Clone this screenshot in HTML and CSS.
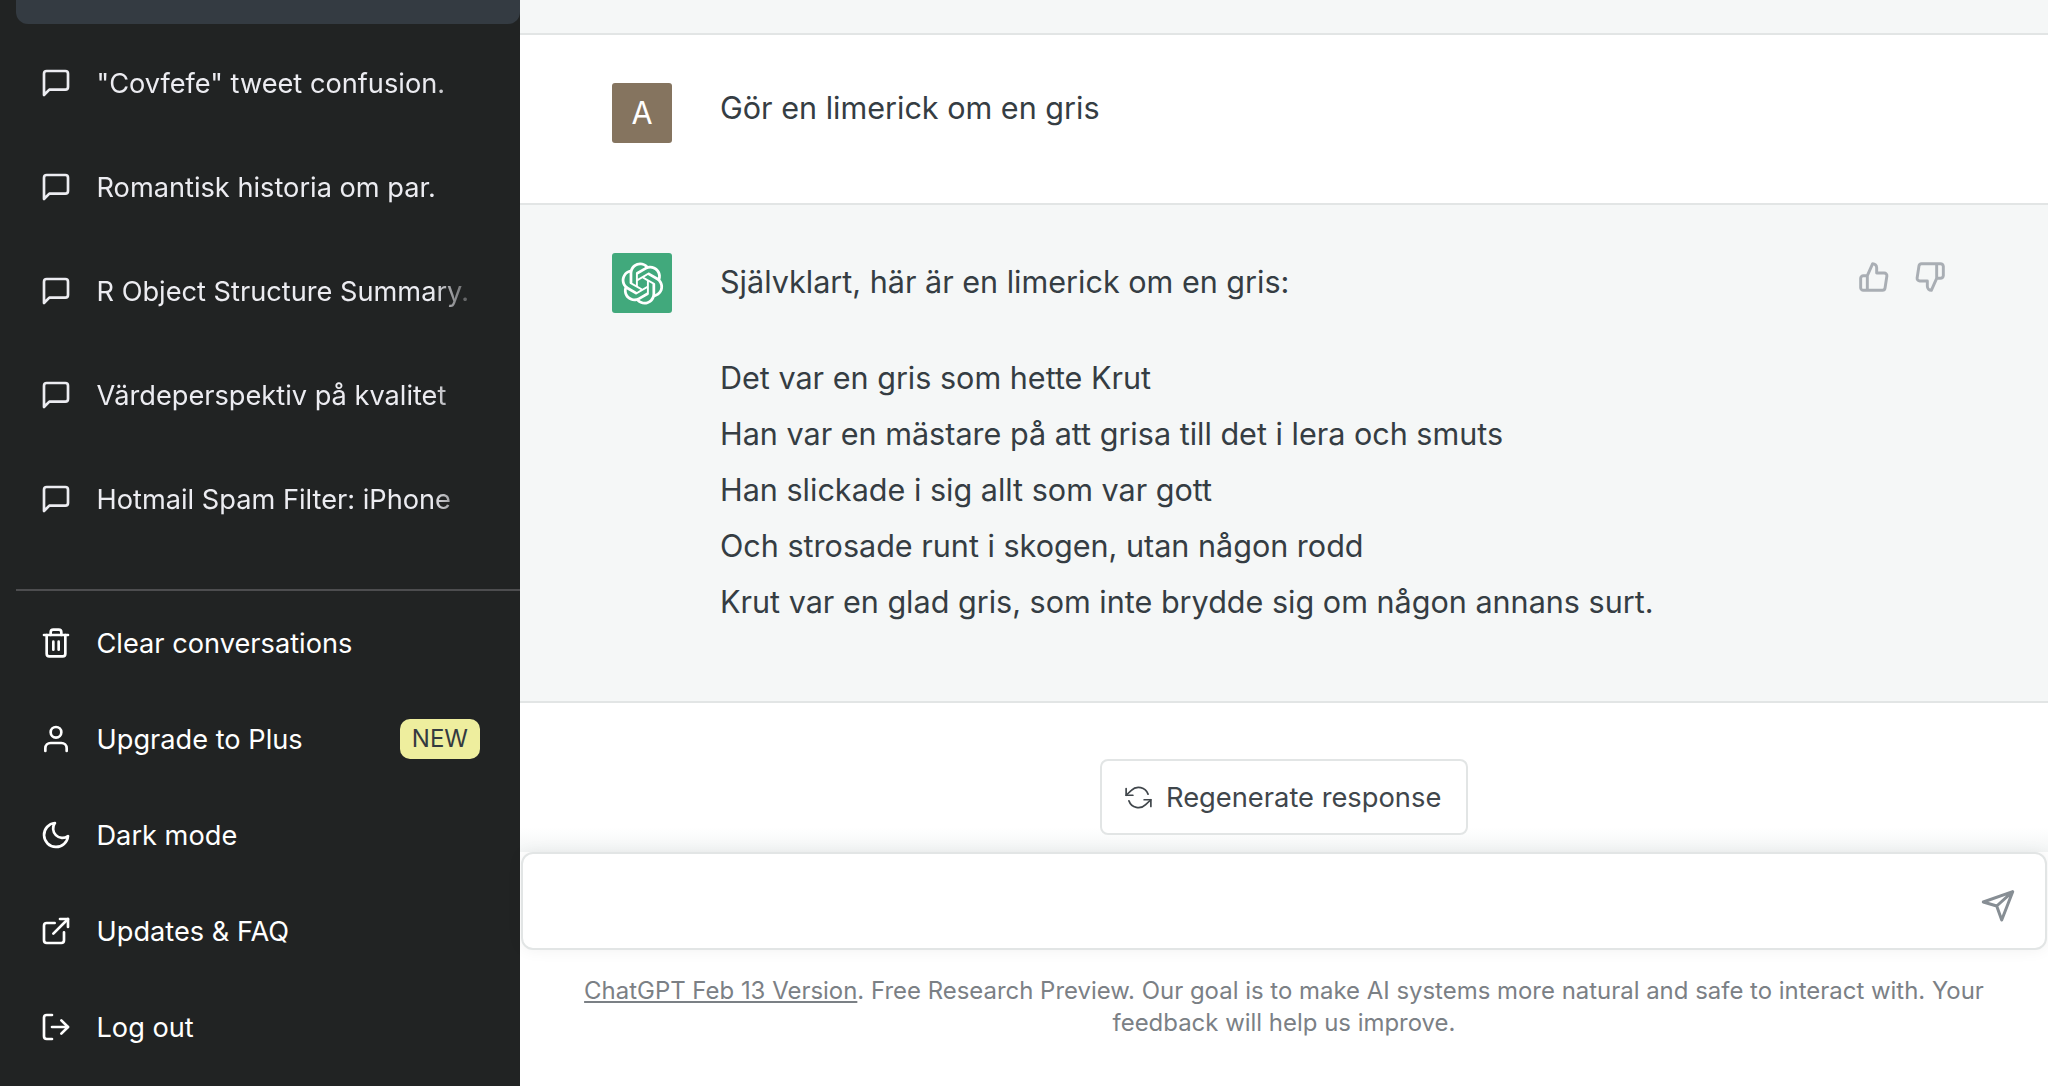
FILE: index.html
```html
<!DOCTYPE html>
<html>

<head>
	<meta charset="UTF-8">
	<link rel="stylesheet" href="styles.css">
</head>

<body>
	<div class="app">
		<!-- sidebar -->
		<nav class="sidebar">
			<div class="active-chat"></div>
			<div class="chat-list">
				<div class="chat-item">
					<svg class="icon" viewBox="0 0 24 24"><path d="M21 15a2 2 0 0 1-2 2H7l-4 4V5a2 2 0 0 1 2-2h14a2 2 0 0 1 2 2z"></path></svg>
					<span class="chat-title">"Covfefe" tweet confusion.</span>
				</div>
				<div class="chat-item">
					<svg class="icon" viewBox="0 0 24 24"><path d="M21 15a2 2 0 0 1-2 2H7l-4 4V5a2 2 0 0 1 2-2h14a2 2 0 0 1 2 2z"></path></svg>
					<span class="chat-title">Romantisk historia om par.</span>
				</div>
				<div class="chat-item">
					<svg class="icon" viewBox="0 0 24 24"><path d="M21 15a2 2 0 0 1-2 2H7l-4 4V5a2 2 0 0 1 2-2h14a2 2 0 0 1 2 2z"></path></svg>
					<span class="chat-title">R Object Structure Summary.</span>
				</div>
				<div class="chat-item">
					<svg class="icon" viewBox="0 0 24 24"><path d="M21 15a2 2 0 0 1-2 2H7l-4 4V5a2 2 0 0 1 2-2h14a2 2 0 0 1 2 2z"></path></svg>
					<span class="chat-title">Värdeperspektiv på kvalitet</span>
				</div>
				<div class="chat-item">
					<svg class="icon" viewBox="0 0 24 24"><path d="M21 15a2 2 0 0 1-2 2H7l-4 4V5a2 2 0 0 1 2-2h14a2 2 0 0 1 2 2z"></path></svg>
					<span class="chat-title">Hotmail Spam Filter: iPhone</span>
				</div>
			</div>
			<div class="menu">
				<div class="menu-item">
					<svg class="icon" viewBox="0 0 24 24"><polyline points="3 6 5 6 21 6"></polyline><path d="M19 6v14a2 2 0 0 1-2 2H7a2 2 0 0 1-2-2V6m3 0V4a2 2 0 0 1 2-2h4a2 2 0 0 1 2 2v2"></path><line x1="10" y1="11" x2="10" y2="17"></line><line x1="14" y1="11" x2="14" y2="17"></line></svg>
					<span>Clear conversations</span>
				</div>
				<div class="menu-item">
					<svg class="icon" viewBox="0 0 24 24"><path d="M20 21v-2a4 4 0 0 0-4-4H8a4 4 0 0 0-4 4v2"></path><circle cx="12" cy="7" r="4"></circle></svg>
					<span>Upgrade to Plus</span>
					<span class="badge">NEW</span>
				</div>
				<div class="menu-item">
					<svg class="icon" viewBox="0 0 24 24"><path d="M21 12.79A9 9 0 1 1 11.21 3 7 7 0 0 0 21 12.79z"></path></svg>
					<span>Dark mode</span>
				</div>
				<div class="menu-item">
					<svg class="icon" viewBox="0 0 24 24"><path d="M18 13v6a2 2 0 0 1-2 2H5a2 2 0 0 1-2-2V8a2 2 0 0 1 2-2h6"></path><polyline points="15 3 21 3 21 9"></polyline><line x1="10" y1="14" x2="21" y2="3"></line></svg>
					<span>Updates &amp; FAQ</span>
				</div>
				<div class="menu-item">
					<svg class="icon" viewBox="0 0 24 24"><path d="M9 21H5a2 2 0 0 1-2-2V5a2 2 0 0 1 2-2h4"></path><polyline points="16 17 21 12 16 7"></polyline><line x1="21" y1="12" x2="9" y2="12"></line></svg>
					<span>Log out</span>
				</div>
			</div>
		</nav>

		<!-- conversation -->
		<main class="main">
			<div class="top-strip"></div>
			<section class="message message-user">
				<div class="avatar avatar-user">A</div>
				<div class="message-text">Gör en limerick om en gris</div>
			</section>
			<section class="message message-bot">
				<div class="avatar avatar-bot">
					<svg viewBox="0 0 41 41" class="bot-logo"><path d="M37.5324 16.8707C37.9808 15.5241 38.1363 14.0974 37.9886 12.6859C37.8409 11.2744 37.3934 9.91076 36.676 8.68622C35.6126 6.83404 33.9882 5.3676 32.0373 4.4985C30.0864 3.62941 27.9098 3.40259 25.8215 3.85078C24.8796 2.7893 23.7219 1.94125 22.4257 1.36341C21.1295 0.785575 19.7249 0.491269 18.3058 0.500197C16.1708 0.495044 14.0893 1.16803 12.3614 2.42214C10.6335 3.67624 9.34853 5.44666 8.6917 7.47815C7.30085 7.76286 5.98686 8.3414 4.8377 9.17505C3.68854 10.0087 2.73073 11.0782 2.02839 12.312C0.956464 14.1591 0.498905 16.2988 0.721698 18.4228C0.944492 20.5467 1.83612 22.5449 3.268 24.1293C2.81966 25.4759 2.66413 26.9026 2.81182 28.3141C2.95951 29.7256 3.40701 31.0892 4.12437 32.3138C5.18791 34.1659 6.8123 35.6322 8.76321 36.5013C10.7141 37.3704 12.8907 37.5973 14.9789 37.1492C15.9208 38.2107 17.0786 39.0587 18.3747 39.6366C19.6709 40.2144 21.0755 40.5087 22.4946 40.4998C24.6307 40.5054 26.7133 39.8321 28.4418 38.5772C30.1704 37.3223 31.4556 35.5506 32.1119 33.5179C33.5027 33.2332 34.8167 32.6547 35.9659 31.821C37.115 30.9874 38.0728 29.9178 38.7752 28.684C39.8458 26.8371 40.3023 24.6979 40.0789 22.5748C39.8556 20.4517 38.9639 18.4544 37.5324 16.8707ZM22.4978 37.8849C20.7443 37.8874 19.0459 37.2733 17.6994 36.1501C17.7601 36.117 17.8666 36.0586 17.936 36.0161L25.9004 31.4156C26.1003 31.3019 26.2663 31.137 26.3813 30.9378C26.4964 30.7386 26.5563 30.5124 26.5549 30.2825V19.0542L29.9213 20.998C29.9389 21.0068 29.9541 21.0198 29.9656 21.0359C29.977 21.052 29.9842 21.0707 29.9867 21.0902V30.3889C29.9842 32.375 29.1946 34.2791 27.7909 35.6841C26.3872 37.0892 24.4838 37.8806 22.4978 37.8849ZM6.39227 31.0064C5.51397 29.4888 5.19742 27.7107 5.49804 25.9832C5.55718 26.0187 5.66048 26.0818 5.73461 26.1244L13.699 30.7248C13.8975 30.8408 14.1233 30.902 14.3532 30.902C14.583 30.902 14.8088 30.8408 15.0073 30.7248L24.731 25.1103V28.9979C24.7321 29.0177 24.7283 29.0376 24.7199 29.0556C24.7115 29.0736 24.6988 29.0893 24.6829 29.1012L16.6317 33.7497C14.9096 34.7416 12.8643 35.0097 10.9447 34.4954C9.02506 33.9811 7.38785 32.7263 6.39227 31.0064ZM4.29707 13.6194C5.17156 12.0998 6.55279 10.9364 8.19885 10.3327C8.19885 10.4013 8.19491 10.5228 8.19491 10.6071V19.808C8.19351 20.0378 8.25334 20.2638 8.36823 20.4629C8.48312 20.6619 8.64893 20.8267 8.84863 20.9404L18.5723 26.5542L15.206 28.4979C15.1894 28.5089 15.1703 28.5155 15.1505 28.5173C15.1307 28.5191 15.1107 28.516 15.0924 28.5082L7.04046 23.8557C5.32135 22.8601 4.06716 21.2235 3.55289 19.3046C3.03862 17.3858 3.30624 15.3413 4.29707 13.6194ZM31.955 20.0556L22.2312 14.4411L25.5976 12.4981C25.6142 12.4872 25.6333 12.4805 25.6531 12.4787C25.6729 12.4769 25.6928 12.4801 25.7111 12.4879L33.7631 17.1364C34.9967 17.849 36.0017 18.8982 36.6606 20.1613C37.3194 21.4244 37.6047 22.849 37.4832 24.2684C37.3617 25.6878 36.8382 27.0432 35.9743 28.1759C35.1103 29.3086 33.9415 30.1717 32.6047 30.6641C32.6047 30.5947 32.6047 30.4733 32.6047 30.3889V21.188C32.6066 20.9586 32.5474 20.7328 32.4332 20.5338C32.319 20.3348 32.154 20.1698 31.955 20.0556ZM35.3055 15.0128C35.2464 14.9765 35.1431 14.9142 35.069 14.8717L27.1045 10.2712C26.906 10.1554 26.6803 10.0943 26.4504 10.0943C26.2206 10.0943 25.9948 10.1554 25.7963 10.2712L16.0726 15.8858V11.9982C16.0715 11.9783 16.0753 11.9585 16.0837 11.9405C16.0921 11.9225 16.1048 11.9068 16.1207 11.8949L24.1719 7.25025C25.4053 6.53903 26.8158 6.19376 28.2383 6.25482C29.6608 6.31589 31.0364 6.78077 32.2044 7.59508C33.3723 8.40939 34.2842 9.53945 34.8334 10.8531C35.3826 12.1667 35.5464 13.6095 35.3055 15.0128ZM14.2424 21.9419L10.8752 19.9981C10.8576 19.9893 10.8423 19.9763 10.8309 19.9602C10.8195 19.9441 10.8122 19.9254 10.8098 19.9058V10.6071C10.8107 9.18295 11.2173 7.78848 11.9819 6.58696C12.7466 5.38544 13.8377 4.42659 15.1275 3.82264C16.4173 3.21869 17.8524 2.99464 19.2649 3.1767C20.6775 3.35876 22.0089 3.93941 23.1034 4.85067C23.0427 4.88379 22.937 4.94215 22.8668 4.98473L14.9024 9.58517C14.7025 9.69878 14.5366 9.86356 14.4215 10.0626C14.3065 10.2616 14.2466 10.4877 14.2479 10.7175L14.2424 21.9419ZM16.071 17.9991L20.4018 15.4978L24.7325 17.9975V22.9985L20.4018 25.4983L16.071 22.9985V17.9991Z"></path></svg>
				</div>
				<div class="message-text">
					<p class="intro">Självklart, här är en limerick om en gris:</p>
					<p class="poem">Det var en gris som hette Krut<br>Han var en mästare på att grisa till det i lera och smuts<br>Han slickade i sig allt som var gott<br>Och strosade runt i skogen, utan någon rodd<br>Krut var en glad gris, som inte brydde sig om någon annans surt.</p>
				</div>
				<div class="feedback">
					<svg class="icon-small" viewBox="0 0 24 24"><path d="M14 9V5a3 3 0 0 0-3-3l-4 9v11h11.28a2 2 0 0 0 2-1.7l1.38-9a2 2 0 0 0-2-2.3zM7 22H4a2 2 0 0 1-2-2v-7a2 2 0 0 1 2-2h3"></path></svg>
					<svg class="icon-small" viewBox="0 0 24 24"><path d="M10 15v4a3 3 0 0 0 3 3l4-9V2H5.72a2 2 0 0 0-2 1.7l-1.38 9a2 2 0 0 0 2 2.3zm7-13h2.67A2.31 2.31 0 0 1 22 4v7a2.31 2.31 0 0 1-2.33 2H17"></path></svg>
				</div>
			</section>
			<div class="bottom">
				<div class="regen-row">
					<button class="regen">
						<svg class="icon-regen" viewBox="0 0 24 24"><polyline points="1 4 1 10 7 10"></polyline><polyline points="23 20 23 14 17 14"></polyline><path d="M20.49 9A9 9 0 0 0 5.64 5.64L1 10m22 4l-4.64 4.36A9 9 0 0 1 3.51 15"></path></svg>
						<span class="regen-label">Regenerate response</span>
					</button>
				</div>
				<div class="input-box">
					<svg class="icon-send" viewBox="0 0 36 36"><path d="M3.3 14 32.7 3.7 21.7 32 16.7 18ZM16.7 18 32.7 3.7"></path></svg>
				</div>
				<p class="footer-note"><u>ChatGPT Feb 13 Version</u>. Free Research Preview. Our goal is to make AI systems more natural and safe to interact with. Your feedback will help us improve.</p>
			</div>
		</main>
	</div>
</body>

</html>
```

FILE: styles.css
```css
html,
body {
	overflow: hidden;
	width: 100%;
	height: 100%;
	margin: 0;
	padding: 0;
}

body {
	font-family: Inter, "Liberation Sans", sans-serif;
}

.app {
	display: flex;
	height: 1086px;
}

/* sidebar */
.sidebar {
	display: flex;
	flex-direction: column;
	flex-shrink: 0;
	width: 520px;
	padding-left: 16px;
	box-sizing: border-box;
	background: #212323;
	color: #ececf1;
	font-size: 27.2px;
}

.active-chat {
	height: 24px;
	background: #343b42;
	border-radius: 0 0 12px 12px;
}

.chat-list {
	display: flex;
	flex-direction: column;
	height: 567px;
	padding-top: 7px;
	box-sizing: border-box;
	border-bottom: 2px solid #4d4d4f;
}

.chat-item {
	display: flex;
	align-items: center;
	gap: 24.5px;
	height: 104px;
	padding-left: 24px;
}

.chat-title {
	width: 385px;
	white-space: nowrap;
	-webkit-mask-image: linear-gradient(to right, #000 335px, transparent 385px);
	mask-image: linear-gradient(to right, #000 335px, transparent 385px);
}

.menu {
	display: flex;
	flex-direction: column;
	padding-top: 4px;
}

.menu-item {
	display: flex;
	align-items: center;
	gap: 24.5px;
	height: 96px;
	padding-left: 24px;
	padding-right: 40px;
	color: #fff;
}

.icon {
	flex-shrink: 0;
	width: 32px;
	height: 32px;
	fill: none;
	stroke: currentColor;
	stroke-width: 2;
	stroke-linecap: round;
	stroke-linejoin: round;
}

.badge {
	margin-left: auto;
	padding: 4px 12px;
	border-radius: 10px;
	background: #eeee9e;
	color: #343a40;
	font-size: 24px;
	line-height: 32px;
}

/* conversation */
.main {
	display: flex;
	flex-direction: column;
	flex: 1;
	min-width: 0;
	color: #353d43;
}

.top-strip {
	height: 33px;
	background: #f5f7f7;
	border-bottom: 2px solid #e2e5e5;
}

.message {
	display: flex;
	box-sizing: border-box;
	padding-left: 92px;
	border-bottom: 2px solid #e2e5e5;
	font-size: 30.55px;
	line-height: 56px;
}

.message-user {
	height: 170px;
	padding-top: 48px;
}

.message-bot {
	height: 498px;
	padding-top: 48px;
	background: #f5f7f7;
}

.avatar {
	display: flex;
	align-items: center;
	justify-content: center;
	flex-shrink: 0;
	width: 60px;
	height: 60px;
	margin-right: 48px;
	border-radius: 3px;
	color: #fff;
}

.avatar-user {
	background: #85745f;
}

.avatar-bot {
	background: #41a97c;
}

.bot-logo {
	width: 43px;
	height: 43px;
	fill: #fff;
}

.message-user .message-text {
	margin-top: -3px;
}

.message-bot .message-text {
	margin-top: 1px;
}

.message-text p {
	margin: 0;
}

.message-text .intro {
	margin-bottom: 40px;
}

.feedback {
	display: flex;
	gap: 24px;
	margin-left: auto;
	margin-right: 102px;
	margin-top: 8px;
	height: 32px;
}

.icon-small {
	width: 32px;
	height: 32px;
	fill: none;
	stroke: #a9aeb4;
	stroke-width: 2.2;
	stroke-linecap: round;
	stroke-linejoin: round;
}

/* bottom */
.bottom {
	flex: 1;
	display: flex;
	flex-direction: column;
	background: linear-gradient(to bottom, #fff 125px, #f3f5f5 149px, #fff 149px);
}

.regen-row {
	display: flex;
	justify-content: center;
	padding-top: 56px;
}

.regen {
	display: flex;
	align-items: center;
	gap: 14px;
	width: 368px;
	height: 76px;
	padding: 0 23px;
	box-sizing: border-box;
	background: #fff;
	border: 2px solid #e2e5e5;
	border-radius: 8px;
	color: #40464b;
	font-family: inherit;
	font-size: 27.3px;
}

.regen-label {
	white-space: nowrap;
}

.icon-regen {
	flex-shrink: 0;
	width: 27px;
	height: 27px;
	fill: none;
	stroke: #40464b;
	stroke-width: 1.5;
	stroke-linecap: round;
	stroke-linejoin: round;
}

.input-box {
	display: flex;
	align-items: center;
	justify-content: flex-end;
	height: 98px;
	margin: 17px 1px 0 1px;
	padding-right: 29px;
	box-sizing: border-box;
	background: #fff;
	border: 2px solid #e2e5e5;
	border-radius: 12px;
	box-shadow: 0 0 16px rgba(0, 0, 0, 0.06);
}

.icon-send {
	width: 36px;
	height: 36px;
	margin-top: 9px;
	fill: none;
	stroke: #878e94;
	stroke-width: 3;
	stroke-linejoin: round;
	stroke-linecap: round;
}

.footer-note {
	margin: 25px 0 0;
	padding: 0 48px;
	color: #7b8085;
	font-size: 23.95px;
	line-height: 32px;
	text-align: center;
}
```
